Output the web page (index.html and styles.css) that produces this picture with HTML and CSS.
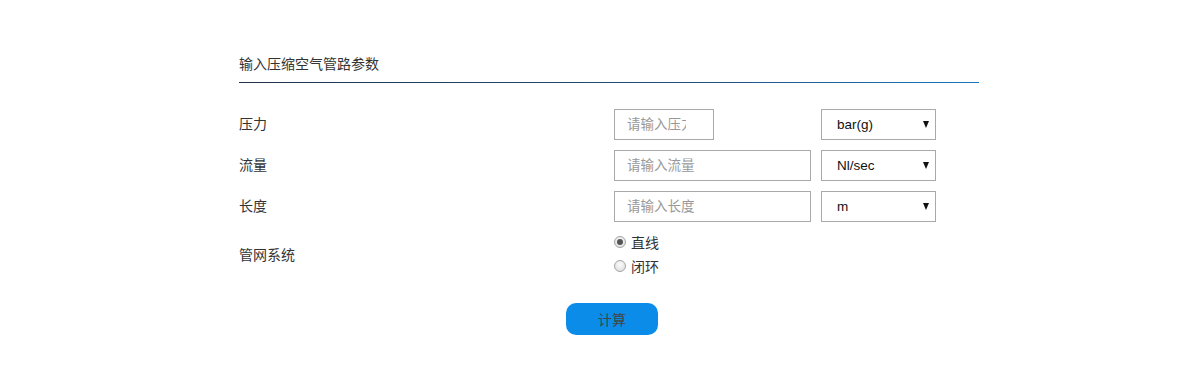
FILE: index.html
```html
<!DOCTYPE html>
<html lang="zh-CN">

<head>
    <meta charset="UTF-8" />
    <meta name="viewport" content="width=device-width, initial-scale=1.0" />
    <title>压缩空气管路计算</title>
    <link rel="stylesheet" href="styles.css">
</head>

<body>
    <div class="panel">
        <h3 class="titulo">输入压缩空气管路参数</h3>

        <div class="fila">
            <label for="presion">压力</label>
            <input id="presion" class="corto" placeholder="请输入压力" />
            <div class="selector">
                <select>
                    <option>bar(g)</option>
                    <option>psi(g)</option>
                    <option>MPa</option>
                </select>
            </div>
        </div>

        <div class="fila">
            <label for="caudal">流量</label>
            <input id="caudal" placeholder="请输入流量" />
            <div class="selector">
                <select>
                    <option>Nl/sec</option>
                    <option>Nm³/min</option>
                    <option>cfm</option>
                </select>
            </div>
        </div>

        <div class="fila">
            <label for="longitud">长度</label>
            <input id="longitud" placeholder="请输入长度" />
            <div class="selector">
                <select>
                    <option>m</option>
                    <option>ft</option>
                </select>
            </div>
        </div>

        <div class="fila radios">
            <label>管网系统</label>
            <div class="opciones">
                <label class="opcion"><input type="radio" name="red" checked /> 直线</label>
                <label class="opcion"><input type="radio" name="red" /> 闭环</label>
            </div>
        </div>

        <button class="calcular">计算</button>
    </div>
</body>

</html>
```

FILE: styles.css
```css
* {
    box-sizing: border-box;
}

body {
    margin: 0;
    background: #fff;
    color: #333;
    font-family: "Liberation Sans", "Noto Sans CJK SC", sans-serif;
    font-size: 14px;
}

.panel {
    width: 740px;
    margin-left: 239px;
    padding-top: 55px;
}

.titulo {
    margin: 0 0 26px;
    padding-bottom: 9px;
    font-size: 14px;
    font-weight: normal;
    line-height: 18px;
    color: #333;
    border-bottom: 1px solid #2a4a6a;
    border-image: linear-gradient(to right, #22344a, #214f7c 60%, #1a76bf) 1;
}

.fila {
    display: grid;
    grid-template-columns: 375px 207px 115px;
    align-items: center;
    height: 31px;
    margin-bottom: 10px;
}

.fila > label {
    color: #333;
    line-height: 18px;
    margin-top: -1px;
}

.fila input {
    width: 197px;
    height: 31px;
    padding: 0 12px;
    border: 1px solid #a9a9a9;
    font-family: inherit;
    font-size: 13.5px;
    color: #333;
    outline: none;
}

.fila input.corto {
    width: 100px;
    padding-right: 27px;
}

.fila input::placeholder {
    color: #999;
}

.selector {
    position: relative;
    width: 115px;
    height: 31px;
}

.selector select {
    appearance: none;
    -webkit-appearance: none;
    width: 100%;
    height: 100%;
    padding: 0 0 0 15px;
    border: 1px solid #a9a9a9;
    border-radius: 0;
    background: #fff;
    font-family: "Liberation Sans", sans-serif;
    font-size: 13.5px;
    color: #111;
    outline: none;
}

.selector::after {
    content: "";
    position: absolute;
    right: 7px;
    top: 12px;
    border-left: 3.5px solid transparent;
    border-right: 3.5px solid transparent;
    border-top: 7px solid #111;
    pointer-events: none;
}

.radios {
    height: 48px;
    margin-top: -1px;
}

.radios > label {
    margin-top: 0;
}

.opciones {
    display: flex;
    flex-direction: column;
    margin-top: -2px;
}

.opcion {
    display: flex;
    align-items: center;
    gap: 5px;
    height: 24px;
}

.opcion input[type=radio] {
    appearance: none;
    -webkit-appearance: none;
    width: 12px;
    height: 12px;
    margin: 0;
    padding: 0;
    border: 1px solid #a4a4a4;
    border-radius: 50%;
    background: radial-gradient(circle at 50% 35%, #fafafa, #dcdcdc);
    position: relative;
}

.opcion input[type=radio]:checked::after {
    content: "";
    position: absolute;
    left: 2px;
    top: 2px;
    width: 6px;
    height: 6px;
    border-radius: 50%;
    background: #555;
}

.calcular {
    display: block;
    width: 92px;
    height: 32px;
    margin: 24px 0 0 327px;
    border: none;
    border-radius: 10px;
    background-color: #0b8ce8;
    color: #444;
    font-family: inherit;
    font-size: 14px;
    cursor: pointer;
}
```
